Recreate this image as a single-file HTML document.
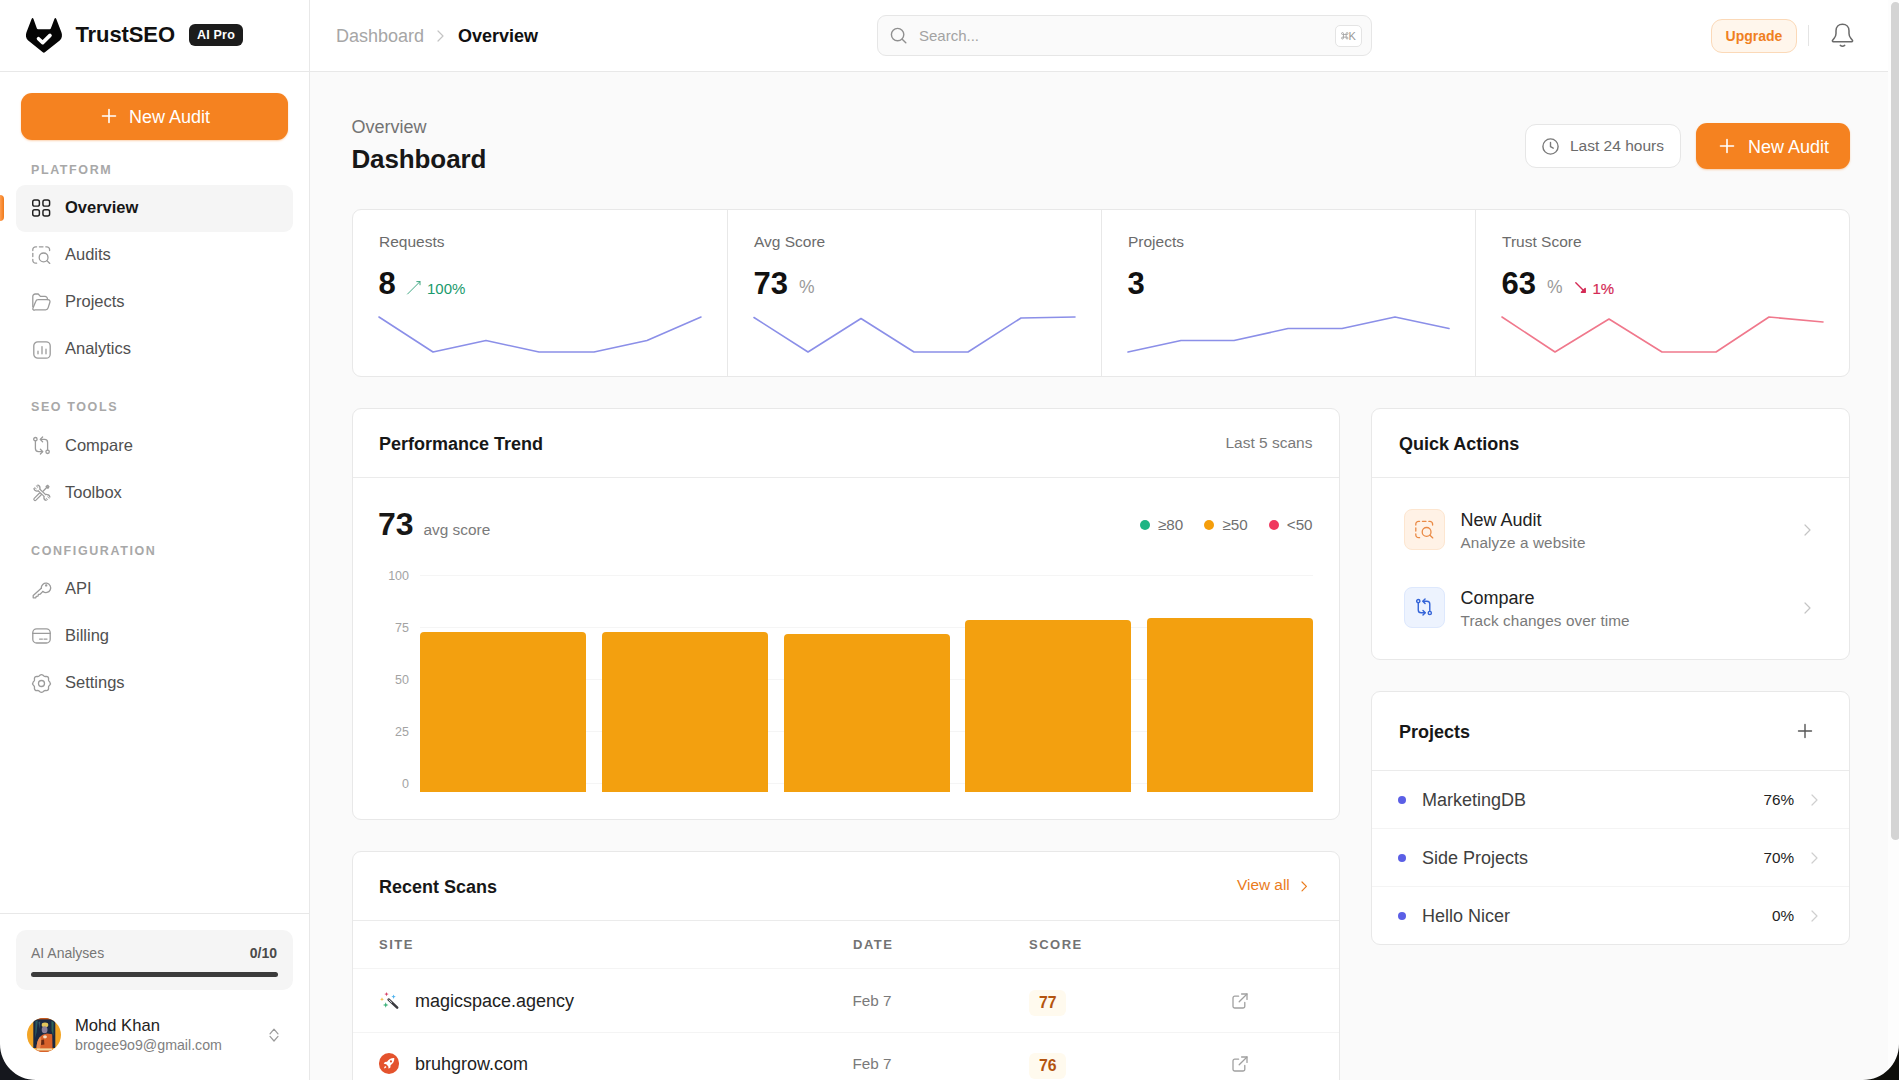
<!DOCTYPE html>
<html lang="en">
<head>
<meta charset="utf-8">
<title>TrustSEO Dashboard</title>
<style>
*{box-sizing:border-box;margin:0;padding:0}
html,body{width:1899px;height:1080px;overflow:hidden;background:#fafafa}
body{font-family:"Liberation Sans",sans-serif;color:#171717;position:relative;-webkit-font-smoothing:antialiased}
.abs{position:absolute}
.t{position:absolute;white-space:nowrap;line-height:1}
svg{display:block;position:absolute;overflow:visible}

/* ---------- sidebar ---------- */
#sidebar{position:absolute;left:0;top:0;width:310px;height:1080px;background:#fff;border-right:1px solid #e8e8e8}
#sb-head{position:absolute;left:0;top:0;width:309px;height:72px;border-bottom:1px solid #e8e8e8}
.brand{left:75.5px;top:24.2px;font-size:22px;font-weight:700;color:#111;letter-spacing:-0.1px}
.badge-pro{position:absolute;left:189px;top:24.4px;letter-spacing:0.2px;width:54px;height:22px;border-radius:6px;background:#1c1c1c;color:#fff;font-size:12.5px;font-weight:700;text-align:center;line-height:22px}
.btn-orange{position:absolute;background:#f58220;border-radius:11px;color:#fff;font-size:18px}
.sec{position:absolute;left:31px;font-size:12.5px;font-weight:700;letter-spacing:1.6px;color:#a8a8a8;line-height:1;white-space:nowrap}
.nav{position:absolute;left:65px;font-size:16.5px;color:#505050;line-height:1;white-space:nowrap}
.nav.on{font-weight:700;color:#171717}
#nav-active{position:absolute;left:16px;top:185px;width:277px;height:46.7px;border-radius:9px;background:#f5f5f5}
#nav-ind{position:absolute;left:0;top:195px;width:4px;height:26px;border-radius:0 4px 4px 0;background:linear-gradient(90deg,#ff9d4f,#ef7a1a)}
#sb-foot-line{position:absolute;left:0;top:913px;width:309px;height:1px;background:#e8e8e8}
#ai-box{position:absolute;left:16px;top:930px;width:277px;height:60px;border-radius:10px;background:#f5f5f5}

/* ---------- topbar ---------- */
#topbar{position:absolute;left:310px;top:0;width:1589px;height:72px;background:#fff;border-bottom:1px solid #e8e8e8}
#search{position:absolute;left:877px;top:15px;width:495px;height:41px;border:1px solid #e6e6e6;border-radius:9px;background:#fafafa}
#kbd{position:absolute;left:1335px;top:25px;width:27px;height:22px;border:1px solid #e4e4e4;border-radius:5px;background:#fff}
#upgrade{position:absolute;left:1711px;top:19px;width:86px;height:34px;border:1px solid #fbd9b8;border-radius:11px;background:#fff6ec;color:#f0801f;font-size:14px;font-weight:700;text-align:center;line-height:32px}

/* ---------- cards ---------- */
.card{position:absolute;background:#fff;border:1px solid #e8e8e8;border-radius:9px}
.hline{position:absolute;height:1px;background:#ebebeb}
.vline{position:absolute;width:1px;background:#e8e8e8}
.h3{font-size:18px;font-weight:700;color:#171717}
.lbl{font-size:15.5px;color:#6b6b6b}
.big{font-size:31px;font-weight:700;color:#111}
.muted{color:#7a7a7a}
.ytick{position:absolute;width:30px;text-align:right;font-size:12.5px;color:#a3a3a3;line-height:1}
.grid{position:absolute;left:420px;width:893px;height:1px;background:#f5f5f5}
.bar{position:absolute;background:#f3a00f;border-radius:4px 4px 0 0}
.dot{position:absolute;border-radius:50%}
</style>
</head>
<body>

<!-- ================= SIDEBAR ================= -->
<div id="sidebar">

  <div id="sb-head">
    <!-- logo -->
    <svg style="left:25px;top:17px" width="38" height="37" viewBox="0 0 38 37">
      <path d="M6.6 2.1Q7.56 -0.1 8.5 2L11.8 11.3Q12.1 12.25 13.1 12.25L24.6 12.25Q25.6 12.25 25.9 11.3L29.4 2Q30.35 -0.1 31.3 2.1L36.4 15.2C37.4 18 37.2 20.8 35 23.2L20.2 35.1Q18.85 36.2 17.5 35.1L2.9 23.2C0.7 20.8 0.5 18 1.5 15.2Z" fill="#050505"/>
      <path d="M13.5 21.7L17.7 25.6L25 18.4" fill="none" stroke="#fff" stroke-width="3.6" stroke-linecap="round" stroke-linejoin="round"/>
    </svg>
    <div class="t brand">TrustSEO</div>
    <div class="badge-pro">AI Pro</div>
  </div>

  <!-- new audit button -->
  <div class="btn-orange" style="left:21px;top:93px;width:267px;height:46.5px;box-shadow:0 1px 2px rgba(245,130,32,.35)">
    <svg style="left:81px;top:16px" width="14" height="14" viewBox="0 0 14 14"><path d="M7 0.5V13.5M0.5 7H13.5" stroke="#fff" stroke-width="1.6" stroke-linecap="round"/></svg>
    <div class="t" style="left:108px;top:14.5px;font-size:18px">New Audit</div>
  </div>

  <div class="sec" style="top:164px">PLATFORM</div>
  <div id="nav-active"></div>
  <div id="nav-ind"></div>

  <!-- overview icon -->
  <svg style="left:32.2px;top:199px" width="18.4" height="18" viewBox="0 0 19 18" fill="none" stroke="#1f1f1f" stroke-width="1.5">
    <rect x="0.75" y="0.75" width="6.9" height="6.3" rx="2"/><rect x="11.3" y="0.75" width="6.9" height="6.3" rx="2"/>
    <rect x="0.75" y="10.9" width="6.9" height="6.3" rx="2"/><rect x="11.3" y="10.9" width="6.9" height="6.3" rx="2"/>
  </svg>
  <div class="nav on" style="top:199px">Overview</div>

  <!-- audits icon -->
  <svg style="left:32px;top:246px" width="19" height="18" viewBox="0 0 19 18" fill="none" stroke="#9b9b9b" stroke-width="1.3" stroke-linecap="round">
    <path d="M0.8 4.6V3.6A2.8 2.8 0 0 1 3.6 0.8H4.6"/><path d="M7.4 0.8H11"/><path d="M13.8 0.8H14.8A2.8 2.8 0 0 1 17.6 3.6V4.6"/>
    <path d="M0.8 7.4V10.6"/><path d="M0.8 13.4V14.4A2.8 2.8 0 0 0 3.6 17.2H4.6"/>
    <circle cx="11.6" cy="11.4" r="4.4"/><path d="M15 14.8L17.8 17.4"/>
  </svg>
  <div class="nav" style="top:246px">Audits</div>

  <!-- projects icon -->
  <svg style="left:32px;top:293px" width="19" height="18" viewBox="0 0 19 18" fill="none" stroke="#9b9b9b" stroke-width="1.3" stroke-linejoin="round" stroke-linecap="round">
    <path d="M0.8 13.8V3.4A2.4 2.4 0 0 1 3.2 1H6.2L8.4 3.4H13A2.4 2.4 0 0 1 15.4 5.8V6.6"/>
    <path d="M3.1 16.8H13.6A2.6 2.6 0 0 0 16.1 14.9L17.9 9.2A2 2 0 0 0 16 6.6H6.2A2.6 2.6 0 0 0 3.7 8.5L1 15A1.4 1.4 0 0 0 3.1 16.8Z"/>
  </svg>
  <div class="nav" style="top:293px">Projects</div>

  <!-- analytics icon -->
  <svg style="left:33px;top:340.8px" width="18" height="18" viewBox="0 0 18 18" fill="none" stroke="#9b9b9b" stroke-width="1.3" stroke-linecap="round">
    <rect x="0.8" y="0.8" width="16.4" height="16.4" rx="4"/>
    <path d="M5 10.2V12.8M9 5.6V12.8M13 8.2V12.8"/>
  </svg>
  <div class="nav" style="top:340px">Analytics</div>

  <div class="sec" style="top:401px">SEO TOOLS</div>

  <!-- compare icon -->
  <svg style="left:33px;top:436px" width="18" height="19" viewBox="0 0 18 19" fill="none" stroke="#9b9b9b" stroke-width="1.3" stroke-linecap="round" stroke-linejoin="round">
    <circle cx="2.4" cy="3.2" r="1.7"/><circle cx="14.6" cy="15.8" r="1.7"/>
    <path d="M2.4 5V12.6A3 3 0 0 0 5.4 15.6H9.4"/><path d="M7.4 13.2L9.8 15.6L7.4 18"/>
    <path d="M14.6 14V6.4A3 3 0 0 0 11.6 3.4H7.6"/><path d="M9.6 1L7.2 3.4L9.6 5.8"/>
  </svg>
  <div class="nav" style="top:437px">Compare</div>

  <!-- toolbox icon -->
  <svg style="left:33px;top:483.7px" width="18" height="18" viewBox="0 0 18 18" fill="none" stroke="#9b9b9b" stroke-width="1.25" stroke-linecap="round" stroke-linejoin="round">
    <path d="M10.3 7L14.4 2.8"/><path d="M14.6 1.3L16 2.7L14.9 4.3L13.1 2.5Z"/>
    <path d="M2.1 15.2L7.2 10.1" stroke-width="3.7"/><path d="M2.1 15.2L7.2 10.1" stroke="#fff" stroke-width="1.3"/>
    <path d="M5 5L13 12.6" stroke-width="3.5" stroke-linecap="butt"/>
    <circle cx="4" cy="4.1" r="3" fill="#fff" stroke-dasharray="13.57 5.28" stroke-linecap="butt" transform="rotate(275 4 4.1)"/>
    <circle cx="13.9" cy="13.5" r="3" fill="#fff" stroke-dasharray="13.57 5.28" stroke-linecap="butt" transform="rotate(95 13.9 13.5)"/>
    <path d="M5.6 5.6L12.4 12" stroke="#fff" stroke-width="1.1" stroke-linecap="butt"/>
    <path d="M4.3 4.4L2.2 2.3" stroke-width="2.9" stroke-linecap="butt"/>
    <path d="M4.6 4.7L1 1.1" stroke="#fff" stroke-width="1.5" stroke-linecap="butt"/>
    <path d="M13.6 13.2L15.7 15.3" stroke-width="2.9" stroke-linecap="butt"/>
    <path d="M13.3 12.9L16.9 16.5" stroke="#fff" stroke-width="1.5" stroke-linecap="butt"/>
  </svg>
  <div class="nav" style="top:484px">Toolbox</div>

  <div class="sec" style="top:544.7px">CONFIGURATION</div>

  <!-- api key icon -->
  <svg style="left:32px;top:579.5px" width="19" height="19" viewBox="0 0 19 19" fill="none" stroke="#9b9b9b" stroke-width="1.3" stroke-linecap="round" stroke-linejoin="round">
    <path d="M9.3 8.3L1.2 15.6V17.8H3.8L4.3 16.3L6 16.1L6.4 14.5L8.1 14.2L10.9 11.4"/>
    <path d="M9.3 8.3A4.7 4.7 0 1 1 10.9 11.4"/>
    <circle cx="14.2" cy="5.4" r="0.55" fill="#9b9b9b"/>
  </svg>
  <div class="nav" style="top:580px">API</div>

  <!-- billing icon -->
  <svg style="left:32px;top:628px" width="19" height="16" viewBox="0 0 19 16" fill="none" stroke="#9b9b9b" stroke-width="1.3" stroke-linecap="round">
    <rect x="0.8" y="0.8" width="17.4" height="14.2" rx="3.8"/>
    <path d="M0.8 5.4H18.2"/><path d="M7.6 11.1H10.4M12 11.1H15"/>
  </svg>
  <div class="nav" style="top:627px">Billing</div>

  <!-- settings icon -->
  <svg style="left:32px;top:673.8px" width="19" height="19" viewBox="0 0 19 19" fill="none" stroke="#9b9b9b" stroke-width="1.3" stroke-linejoin="round">
    <path d="M7.9 1.3C8.9 0.5 10.1 0.5 11.1 1.3L11.9 2C12.3 2.3 12.8 2.5 13.3 2.5L14.3 2.4C15.6 2.4 16.6 3.4 16.6 4.7L16.5 5.7C16.5 6.2 16.7 6.7 17 7.1L17.7 7.9C18.5 8.9 18.5 10.1 17.7 11.1L17 11.9C16.7 12.3 16.5 12.8 16.5 13.3L16.6 14.3C16.6 15.6 15.6 16.6 14.3 16.6L13.3 16.5C12.8 16.5 12.3 16.7 11.9 17L11.1 17.7C10.1 18.5 8.9 18.5 7.9 17.7L7.1 17C6.7 16.7 6.2 16.5 5.7 16.5L4.7 16.6C3.4 16.6 2.4 15.6 2.4 14.3L2.5 13.3C2.5 12.8 2.3 12.3 2 11.9L1.3 11.1C0.5 10.1 0.5 8.9 1.3 7.9L2 7.1C2.3 6.7 2.5 6.2 2.5 5.7L2.4 4.7C2.4 3.4 3.4 2.4 4.7 2.4L5.7 2.5C6.2 2.5 6.7 2.3 7.1 2Z"/>
    <circle cx="9.5" cy="9.5" r="3"/>
  </svg>
  <div class="nav" style="top:674px">Settings</div>

  <div id="sb-foot-line"></div>
  <div id="ai-box">
    <div class="t" style="left:15px;top:16px;font-size:14px;color:#767676">AI Analyses</div>
    <div class="t" style="right:16px;top:16px;font-size:14px;font-weight:700;color:#4a4a4a">0/10</div>
    <div class="abs" style="left:15px;top:41.8px;width:247px;height:5px;border-radius:3px;background:#3b3b3b"></div>
  </div>

  <!-- avatar -->
  <svg style="left:27px;top:1018px" width="34" height="34" viewBox="0 0 34 34">
    <defs><clipPath id="avc"><circle cx="17" cy="17" r="17"/></clipPath></defs>
    <g clip-path="url(#avc)">
      <rect width="34" height="34" fill="#f3a526"/>
      <rect x="6.3" y="0.6" width="22" height="29.4" fill="#1b2942"/>
      <rect x="6.3" y="0" width="22" height="1.4" fill="#c9561c"/>
      <path d="M8.4 3L10.8 2.4L9.6 14L8.2 20Z" fill="#2c5a60"/><path d="M24.4 3L26.6 4L26.4 18L24.6 13Z" fill="#2f6258"/>
      <path d="M11.5 4L13.2 3.4L12.4 11Z" fill="#34586a"/>
      <ellipse cx="18" cy="6.9" rx="3.3" ry="2.4" fill="#e2c55b"/>
      <ellipse cx="17.6" cy="11.8" rx="2.9" ry="3.5" fill="#8c7f99"/>
      <path d="M9.2 34C9 26 11 19.5 16 16.6L20 15.6L25.2 16.2L25.6 34Z" fill="#d8622b"/>
      <path d="M9.6 31C9.6 25 11 20.6 13.6 18.6L14.4 24L13 31Z" fill="#e98b52"/>
      <path d="M14.4 22L17 21.4L17.4 26.6L14 27Z" fill="#6a2a15"/>
      <ellipse cx="18" cy="18.8" rx="1.9" ry="1.6" fill="#f5dfc4"/>
      <rect x="9.5" y="30.4" width="15.5" height="2.4" fill="#f4d9a0"/>
      <rect x="9.5" y="32.6" width="15.5" height="1.6" fill="#d8622b"/>
    </g>
  </svg>
  <div class="t" style="left:75px;top:1018.4px;font-size:16.6px;color:#222">Mohd Khan</div>
  <div class="t" style="left:75px;top:1038.4px;font-size:14.2px;color:#808080">brogee9o9@gmail.com</div>
  <svg style="left:268.7px;top:1027.9px" width="10" height="14" viewBox="0 0 10 14" fill="none" stroke="#9a9a9a" stroke-width="1.2" stroke-linecap="round" stroke-linejoin="round">
    <path d="M1 5.8L5 1.2L9 5.8"/><path d="M1 8.4L5 13L9 8.4"/>
  </svg>
</div>

<!-- ================= TOPBAR ================= -->
<div id="topbar"></div>
<div class="t" style="left:336px;top:27px;font-size:18px;color:#a6a6a6">Dashboard</div>
<svg style="left:437px;top:30px" width="7" height="12" viewBox="0 0 7 12" fill="none" stroke="#c4c4c4" stroke-width="1.2" stroke-linecap="round" stroke-linejoin="round"><path d="M1 1L6 6L1 11"/></svg>
<div class="t" style="left:458px;top:27px;font-size:18px;font-weight:700;color:#111">Overview</div>

<div id="search"></div>
<svg style="left:890px;top:27px" width="17" height="17" viewBox="0 0 17 17" fill="none" stroke="#8f8f8f" stroke-width="1.4" stroke-linecap="round"><circle cx="7.6" cy="7.6" r="6.2"/><path d="M12.2 12.2L15.8 15.8"/></svg>
<div class="t" style="left:919px;top:28px;font-size:15px;color:#a3a3a3">Search...</div>
<div id="kbd"><svg style="left:5.4px;top:5.9px" width="7.6" height="7.6" viewBox="0 0 8 8" fill="none" stroke="#9a9a9a" stroke-width="0.85"><path d="M2.6 2.6H5.4V5.4H2.6Z M2.6 2.6V1.6A1 1 0 1 0 1.6 2.6Z M5.4 2.6H6.4A1 1 0 1 0 5.4 1.6Z M5.4 5.4V6.4A1 1 0 1 0 6.4 5.4Z M2.6 5.4H1.6A1 1 0 1 0 2.6 6.4Z"/></svg><div class="t" style="left:12.6px;top:4.6px;font-size:11px;color:#999">K</div></div>

<div id="upgrade">Upgrade</div>
<div class="abs" style="left:1808px;top:25px;width:1px;height:21px;background:#e4e4e4"></div>
<svg style="left:1831px;top:23px" width="23" height="25" viewBox="0 0 23 25" fill="none" stroke="#6a6a6a" stroke-width="1.5" stroke-linecap="round" stroke-linejoin="round">
  <path d="M11.5 1.2C7.6 1.2 5 4 5 7.8V10.6C5 12.4 4.4 13.9 3.2 15.3L1.6 17.2C1.1 17.8 1.5 18.7 2.3 18.7H20.7C21.5 18.7 21.9 17.8 21.4 17.2L19.8 15.3C18.6 13.9 18 12.4 18 10.6V7.8C18 4 15.4 1.2 11.5 1.2Z"/>
  <path d="M9.3 22.4C10.6 23.3 12.4 23.3 13.7 22.4"/>
</svg>

<!-- ================= MAIN ================= -->
<div id="main">
<div class="t" style="left:351.5px;top:118px;font-size:18px;color:#737373">Overview</div>
<div class="t" style="left:351.4px;top:146.4px;font-size:26px;font-weight:700;color:#171717;letter-spacing:-0.1px">Dashboard</div>

<!-- last 24h -->
<div class="abs" style="left:1525px;top:124px;width:156px;height:44px;background:#fff;border:1px solid #e6e6e6;border-radius:11px"></div>
<svg style="left:1542px;top:138px" width="17" height="17" viewBox="0 0 17 17" fill="none" stroke="#7a7a7a" stroke-width="1.4" stroke-linecap="round" stroke-linejoin="round"><circle cx="8.5" cy="8.5" r="7.6"/><path d="M8.5 4.4V8.7L11.2 10.2"/></svg>
<div class="t" style="left:1570px;top:138px;font-size:15.5px;color:#6b6b6b">Last 24 hours</div>

<!-- new audit (header) -->
<div class="btn-orange" style="left:1696px;top:123px;width:154px;height:46px;box-shadow:0 1px 2px rgba(245,130,32,.35)">
  <svg style="left:24px;top:16px" width="14" height="14" viewBox="0 0 14 14"><path d="M7 0.5V13.5M0.5 7H13.5" stroke="#fff" stroke-width="1.6" stroke-linecap="round"/></svg>
  <div class="t" style="left:52px;top:14.5px;font-size:18px">New Audit</div>
</div>

<!-- ===== stats ===== -->
<div class="card" style="left:352px;top:209px;width:1498px;height:168px"></div>
<div class="vline" style="left:727px;top:210px;height:166px"></div>
<div class="vline" style="left:1101px;top:210px;height:166px"></div>
<div class="vline" style="left:1475px;top:210px;height:166px"></div>

<div class="t lbl" style="left:379px;top:233.8px">Requests</div>
<div class="t big" style="left:378.6px;top:267.5px">8</div>
<svg style="left:407px;top:281px" width="14" height="14" viewBox="0 0 14 14" fill="none" stroke="#2a9d74" stroke-width="0.9" stroke-linecap="round" stroke-linejoin="round"><path d="M0.6 13L13 0.6"/><path d="M9.8 0.6H13V3.8"/></svg>
<div class="t" style="left:427px;top:280.6px;font-size:15px;color:#1a9a6c">100%</div>

<div class="t lbl" style="left:754px;top:233.8px">Avg Score</div>
<div class="t big" style="left:753.6px;top:267.5px">73</div>
<div class="t" style="left:799px;top:278.5px;font-size:17.5px;color:#9a9a9a">%</div>

<div class="t lbl" style="left:1128px;top:233.8px">Projects</div>
<div class="t big" style="left:1127.6px;top:267.5px">3</div>

<div class="t lbl" style="left:1502px;top:233.8px">Trust Score</div>
<div class="t big" style="left:1501.6px;top:267.5px">63</div>
<div class="t" style="left:1547px;top:278.5px;font-size:17.5px;color:#9a9a9a">%</div>
<svg style="left:1575px;top:282px" width="11" height="11" viewBox="0 0 11 11" fill="none" stroke="#d42a55" stroke-width="1.4" stroke-linecap="round" stroke-linejoin="round"><path d="M0.8 0.8L10 10"/><path d="M6.4 10.2H10.2V6.4Z" fill="#d42a55"/></svg>
<div class="t" style="left:1592.5px;top:281px;font-size:15px;color:#d42a55;-webkit-text-stroke:0.2px #d42a55">1%</div>
<svg style="left:0;top:0" width="1899" height="1080" viewBox="0 0 1899 1080" fill="none"><path d="M379 317 L433 352 L486 340.5 L539 352 L594 352 L647 340.5 L701 317" stroke="#8b8fe8" stroke-width="1.6" stroke-linejoin="round" stroke-linecap="round"/></svg>
<svg style="left:0;top:0" width="1899" height="1080" viewBox="0 0 1899 1080" fill="none"><path d="M754 317.5 L808 352 L861 318.5 L914 352 L968 352 L1021 318 L1075 317" stroke="#8b8fe8" stroke-width="1.6" stroke-linejoin="round" stroke-linecap="round"/></svg>
<svg style="left:0;top:0" width="1899" height="1080" viewBox="0 0 1899 1080" fill="none"><path d="M1128 352 L1181 340.5 L1234 340.5 L1288 328.5 L1342 328.5 L1395 317 L1449 328.5" stroke="#8b8fe8" stroke-width="1.6" stroke-linejoin="round" stroke-linecap="round"/></svg>
<svg style="left:0;top:0" width="1899" height="1080" viewBox="0 0 1899 1080" fill="none"><path d="M1502 317 L1555 352 L1609 319 L1662 352 L1716 352 L1769 317 L1823 322" stroke="#f0788c" stroke-width="1.6" stroke-linejoin="round" stroke-linecap="round"/></svg>
<!-- ===== performance trend ===== -->
<div class="card" style="left:352px;top:408px;width:988px;height:412px"></div>
<div class="hline" style="left:353px;top:477px;width:986px"></div>
<div class="t h3" style="left:379px;top:434.8px">Performance Trend</div>
<div class="t" style="right:586.5px;top:435px;font-size:15.5px;color:#7a7a7a">Last 5 scans</div>
<div class="t" style="left:378px;top:508px;font-size:32px;font-weight:700;color:#171717">73</div>
<div class="t" style="left:423.5px;top:521.8px;font-size:15.4px;color:#7a7a7a">avg score</div>
<div class="dot" style="left:1140px;top:519.5px;width:10px;height:10px;background:#1db584"></div>
<div class="t" style="left:1158px;top:516.6px;font-size:15.2px;color:#6f6f6f">&#8805;80</div>
<div class="dot" style="left:1204px;top:519.5px;width:10px;height:10px;background:#f59e0b"></div>
<div class="t" style="left:1222.5px;top:516.6px;font-size:15.2px;color:#6f6f6f">&#8805;50</div>
<div class="dot" style="left:1269px;top:519.5px;width:10px;height:10px;background:#f0395f"></div>
<div class="t" style="left:1286.8px;top:516.6px;font-size:15.2px;color:#6f6f6f">&lt;50</div>
<div class="ytick" style="left:379px;top:569.8px">100</div><div class="grid" style="top:575px"></div>
<div class="ytick" style="left:379px;top:621.8px">75</div><div class="grid" style="top:627px"></div>
<div class="ytick" style="left:379px;top:673.8px">50</div><div class="grid" style="top:679px"></div>
<div class="ytick" style="left:379px;top:725.8px">25</div><div class="grid" style="top:731px"></div>
<div class="ytick" style="left:379px;top:777.8px">0</div><div class="grid" style="top:783px"></div>
<div class="bar" style="left:420px;top:632px;width:166px;height:160px"></div>
<div class="bar" style="left:601.75px;top:632px;width:166px;height:160px"></div>
<div class="bar" style="left:783.5px;top:634px;width:166px;height:158px"></div>
<div class="bar" style="left:965.25px;top:620px;width:166px;height:172px"></div>
<div class="bar" style="left:1147px;top:618px;width:166px;height:174px"></div>

<!-- ===== quick actions ===== -->
<div class="card" style="left:1371px;top:408px;width:479px;height:252px"></div>
<div class="hline" style="left:1372px;top:477px;width:477px"></div>
<div class="t h3" style="left:1399px;top:434.8px">Quick Actions</div>

<div class="abs" style="left:1404px;top:509px;width:41px;height:41px;border-radius:8px;background:#fff2e6;border:1px solid #fde6d0"></div>
<svg style="left:1415px;top:520px" width="19" height="19" viewBox="0 0 19 18" fill="none" stroke="#ea8a45" stroke-width="1.3" stroke-linecap="round">
  <path d="M0.8 4.6V3.6A2.8 2.8 0 0 1 3.6 0.8H4.6"/><path d="M7.4 0.8H11"/><path d="M13.8 0.8H14.8A2.8 2.8 0 0 1 17.6 3.6V4.6"/>
  <path d="M0.8 7.4V10.6"/><path d="M0.8 13.4V14.4A2.8 2.8 0 0 0 3.6 17.2H4.6"/>
  <circle cx="11.6" cy="11.4" r="4.4"/><path d="M15 14.8L17.8 17.4"/>
</svg>
<div class="t" style="left:1460.5px;top:511px;font-size:18px;color:#222">New Audit</div>
<div class="t" style="left:1460.5px;top:534.8px;font-size:15.3px;color:#7a7a7a;letter-spacing:0.1px">Analyze a website</div>
<svg style="left:1804px;top:523.5px" width="7" height="12" viewBox="0 0 7 12" fill="none" stroke="#c4c4c4" stroke-width="1.2" stroke-linecap="round" stroke-linejoin="round"><path d="M1 1L6 6L1 11"/></svg>
<div class="abs" style="left:1404px;top:587px;width:41px;height:41px;border-radius:8px;background:#edf3fe;border:1px solid #dde8fd"></div>
<svg style="left:1416px;top:598px" width="17" height="18" viewBox="0 0 18 19" fill="none" stroke="#3565d8" stroke-width="1.5" stroke-linecap="round" stroke-linejoin="round">
  <circle cx="2.4" cy="3.2" r="1.7"/><circle cx="14.6" cy="15.8" r="1.7"/>
  <path d="M2.4 5V12.6A3 3 0 0 0 5.4 15.6H9.4"/><path d="M7.4 13.2L9.8 15.6L7.4 18"/>
  <path d="M14.6 14V6.4A3 3 0 0 0 11.6 3.4H7.6"/><path d="M9.6 1L7.2 3.4L9.6 5.8"/>
</svg>
<div class="t" style="left:1460.5px;top:589px;font-size:18px;color:#222">Compare</div>
<div class="t" style="left:1460.5px;top:612.8px;font-size:15.3px;color:#7a7a7a;letter-spacing:0.1px">Track changes over time</div>
<svg style="left:1804px;top:601.5px" width="7" height="12" viewBox="0 0 7 12" fill="none" stroke="#c4c4c4" stroke-width="1.2" stroke-linecap="round" stroke-linejoin="round"><path d="M1 1L6 6L1 11"/></svg>
<!-- ===== projects ===== -->
<div class="card" style="left:1371px;top:691px;width:479px;height:254px"></div>
<div class="hline" style="left:1372px;top:770px;width:477px"></div>
<div class="hline" style="left:1372px;top:828px;width:477px;background:#f4f4f4"></div>
<div class="hline" style="left:1372px;top:886px;width:477px;background:#f4f4f4"></div>
<div class="t h3" style="left:1399px;top:722.6px">Projects</div>
<svg style="left:1798px;top:724px" width="14" height="14" viewBox="0 0 14 14"><path d="M7 0.5V13.5M0.5 7H13.5" stroke="#555" stroke-width="1.4" stroke-linecap="round"/></svg>

<div class="dot" style="left:1398px;top:796px;width:8px;height:8px;background:#5b5fe6"></div>
<div class="t" style="left:1422px;top:791px;font-size:18px;color:#404040">MarketingDB</div>
<div class="t" style="right:105px;top:792px;font-size:15.3px;color:#222">76%</div>
<svg style="left:1811px;top:794px" width="7" height="12" viewBox="0 0 7 12" fill="none" stroke="#cfcfcf" stroke-width="1.2" stroke-linecap="round" stroke-linejoin="round"><path d="M1 1L6 6L1 11"/></svg>
<div class="dot" style="left:1398px;top:854px;width:8px;height:8px;background:#5b5fe6"></div>
<div class="t" style="left:1422px;top:849px;font-size:18px;color:#404040">Side Projects</div>
<div class="t" style="right:105px;top:850px;font-size:15.3px;color:#222">70%</div>
<svg style="left:1811px;top:852px" width="7" height="12" viewBox="0 0 7 12" fill="none" stroke="#cfcfcf" stroke-width="1.2" stroke-linecap="round" stroke-linejoin="round"><path d="M1 1L6 6L1 11"/></svg>
<div class="dot" style="left:1398px;top:912px;width:8px;height:8px;background:#5b5fe6"></div>
<div class="t" style="left:1422px;top:907px;font-size:18px;color:#404040">Hello Nicer</div>
<div class="t" style="right:105px;top:908px;font-size:15.3px;color:#222">0%</div>
<svg style="left:1811px;top:910px" width="7" height="12" viewBox="0 0 7 12" fill="none" stroke="#cfcfcf" stroke-width="1.2" stroke-linecap="round" stroke-linejoin="round"><path d="M1 1L6 6L1 11"/></svg>
<!-- ===== recent scans ===== -->
<div class="card" style="left:352px;top:851px;width:988px;height:260px"></div>
<div class="hline" style="left:353px;top:920px;width:986px"></div>
<div class="hline" style="left:353px;top:968px;width:986px;background:#f4f4f4"></div>
<div class="hline" style="left:353px;top:1032px;width:986px;background:#f4f4f4"></div>
<div class="t h3" style="left:379px;top:877.8px">Recent Scans</div>
<div class="t" style="left:1237px;top:877.3px;font-size:15.4px;color:#ea7b1c">View all</div>
<svg style="left:1301px;top:881px" width="7" height="11" viewBox="0 0 7 11" fill="none" stroke="#ea7b1c" stroke-width="1.2" stroke-linecap="round" stroke-linejoin="round"><path d="M1 1L5.4 5.4L1 9.8"/></svg>
<div class="t" style="left:379px;top:938px;font-size:13px;font-weight:700;letter-spacing:1.5px;color:#737373">SITE</div>
<div class="t" style="left:853px;top:938px;font-size:13px;font-weight:700;letter-spacing:1.5px;color:#737373">DATE</div>
<div class="t" style="left:1029px;top:938px;font-size:13px;font-weight:700;letter-spacing:1.5px;color:#737373">SCORE</div>

<!-- row 1 -->
<svg style="left:379px;top:990px" width="20" height="20" viewBox="0 0 20 20">
  <path d="M9.6 9.5L18.2 17.7" stroke="#3a3a3f" stroke-width="2.5" stroke-linecap="round"/>
  <path d="M10 9.9L12.6 12.4" stroke="#e4e6ec" stroke-width="1" stroke-linecap="round"/>
  <path d="M7.5 1.8999999999999995L8.116 3.4839999999999995L9.7 4.1L8.116 4.715999999999999L7.5 6.3L6.884 4.715999999999999L5.3 4.1L6.884 3.4839999999999995Z" fill="#d9466a"/>
  <path d="M14.6 4.5L15.216 6.084L16.8 6.7L15.216 7.316000000000001L14.6 8.9L13.984 7.316000000000001L12.399999999999999 6.7L13.984 6.084Z" fill="#4fb3ee"/>
  <path d="M3.0 7.300000000000001L3.56 8.74L5.0 9.3L3.56 9.860000000000001L3.0 11.3L2.44 9.860000000000001L1.0 9.3L2.44 8.74Z" fill="#f0b840"/>
  <path d="M6.7 12.2L7.484 14.216L9.5 15L7.484 15.784L6.7 17.8L5.916 15.784L3.9000000000000004 15L5.916 14.216Z" fill="#3fb37c"/>
</svg>
<div class="t" style="left:415px;top:992px;font-size:18px;color:#222">magicspace.agency</div>
<div class="t" style="left:852.5px;top:993px;font-size:15.3px;color:#7a7a7a">Feb 7</div>
<div class="abs" style="left:1029px;top:990px;width:37px;height:26px;border-radius:6px;background:#fffaee"></div>
<div class="t" style="left:1039px;top:994.6px;font-size:15.8px;font-weight:700;color:#b4540e">77</div>
<svg style="left:1232px;top:992.7px" width="16" height="16" viewBox="0 0 16 16" fill="none" stroke="#a0a0a0" stroke-width="1.3" stroke-linecap="round" stroke-linejoin="round"><path d="M6.6 3.2H2.8A1.8 1.8 0 0 0 1 5V13.2A1.8 1.8 0 0 0 2.8 15H11A1.8 1.8 0 0 0 12.8 13.2V9.4"/><path d="M9.6 1H15V6.4"/><path d="M15 1L7.2 8.8"/></svg>
<!-- row 2 -->
<div class="abs" style="left:378.7px;top:1053px;width:20.6px;height:20.6px;border-radius:50%;background:#e4532d"></div>
<svg style="left:378.7px;top:1053px" width="20.6" height="20.6" viewBox="0 0 21 21">
  <path d="M15.6 5.2C12.6 5 9.8 6.4 8.2 9L6 9.2L4.8 11L7.4 11.4L9.4 13.4L9.8 16L11.6 14.8L11.8 12.6C14.4 11 15.8 8.2 15.6 5.2Z" fill="#fff"/>
  <circle cx="12.2" cy="8.6" r="1.1" fill="#e2522c"/>
  <path d="M6.4 13.2C5.6 13.6 5.2 15 5 15.8C5.8 15.6 7.2 15.2 7.6 14.4" fill="#fff"/>
</svg>
<div class="t" style="left:415px;top:1055.4px;font-size:18px;color:#222">bruhgrow.com</div>
<div class="t" style="left:852.5px;top:1056.2px;font-size:15.3px;color:#7a7a7a">Feb 7</div>
<div class="abs" style="left:1029px;top:1053px;width:37px;height:26px;border-radius:6px;background:#fffaee"></div>
<div class="t" style="left:1039px;top:1057.6px;font-size:15.8px;font-weight:700;color:#b4540e">76</div>
<svg style="left:1232px;top:1056px" width="16" height="16" viewBox="0 0 16 16" fill="none" stroke="#a0a0a0" stroke-width="1.3" stroke-linecap="round" stroke-linejoin="round"><path d="M6.6 3.2H2.8A1.8 1.8 0 0 0 1 5V13.2A1.8 1.8 0 0 0 2.8 15H11A1.8 1.8 0 0 0 12.8 13.2V9.4"/><path d="M9.6 1H15V6.4"/><path d="M15 1L7.2 8.8"/></svg>
<!-- scrollbar -->
<div class="abs" style="left:1888px;top:0;width:11px;height:1080px;background:#fdfdfd"></div>
<div class="abs" style="left:1891px;top:1.5px;width:9px;height:838.5px;border-radius:4.5px;background:#d4d4d4"></div>

<!-- window corners -->
<svg style="left:0;top:1044px" width="36" height="36" viewBox="0 0 36 36"><path d="M0 0V36H36C16 36 0 20 0 0Z" fill="#15171d"/></svg>
<svg style="left:1863px;top:1044px" width="36" height="36" viewBox="0 0 36 36"><path d="M36 0V36H0C20 36 36 20 36 0Z" fill="#0e0e0a"/></svg>
</div>

</body>
</html>
